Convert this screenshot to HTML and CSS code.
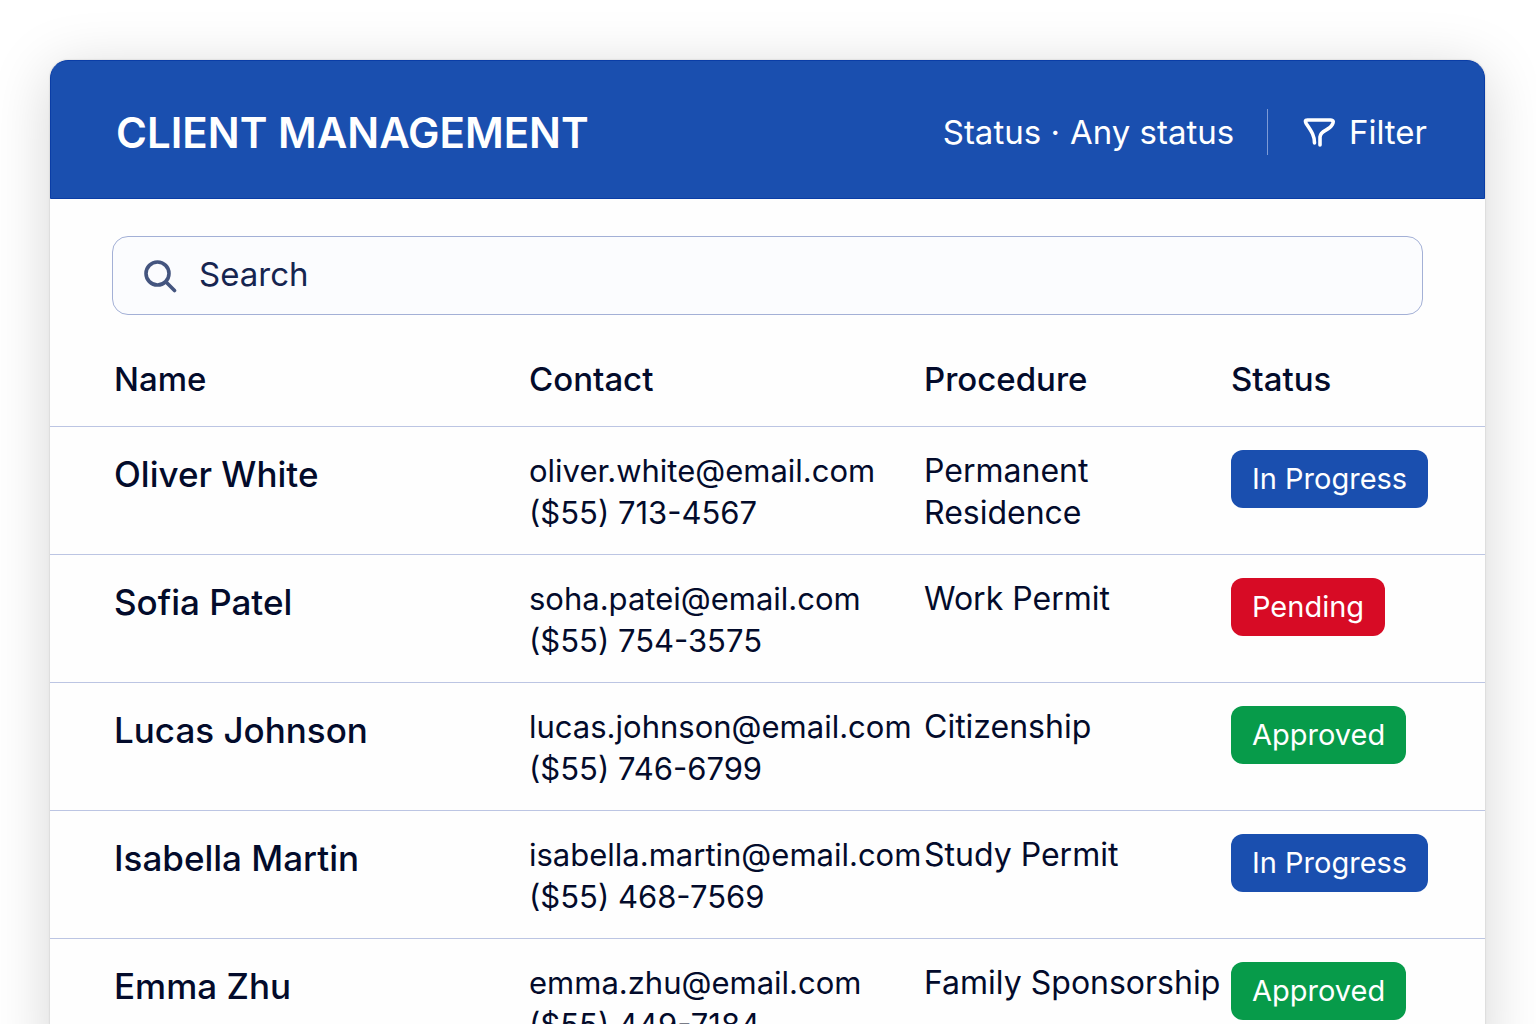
FILE: index.html
```html
<!DOCTYPE html>
<html lang="en">
<head>
<meta charset="utf-8">
<meta name="viewport" content="width=device-width, initial-scale=1">
<title>Client Management</title>
<link rel="stylesheet" href="styles.css">
</head>
<body>
<main class="card">
  <header class="card-header">
    <h1 class="title">CLIENT MANAGEMENT</h1>
    <div class="tools">
      <div class="status-filter">
        <label for="status">Status ·</label>
        <select id="status" class="status-select">
          <option>Any status</option>
        </select>
      </div>
      <button type="button" class="filter-button">
        <svg class="filter-icon" width="32" height="32" viewBox="0 0 32 32" fill="none" stroke="currentColor" stroke-width="3.6" stroke-linecap="round" stroke-linejoin="round" aria-hidden="true">
          <path d="M11.500 27C11.500 20 9 16 3.500 8Q1 4 4.500 4H27.500Q32 4 29 9C26 15 17.500 14 17 21V29"/>
        </svg>
        <span>Filter</span>
      </button>
    </div>
  </header>
  <div class="search">
    <svg class="search-icon" width="34" height="34" viewBox="0 0 34 34" fill="none" stroke="currentColor" stroke-width="3.6" stroke-linecap="round" aria-hidden="true">
      <circle cx="14.500" cy="14.500" r="11.500"/>
      <path d="M23 23L31.500 31.500"/>
    </svg>
    <input class="search-input" type="search" placeholder="Search" aria-label="Search">
  </div>
  <table class="clients">
    <colgroup>
      <col class="col-name"><col class="col-contact"><col class="col-procedure"><col class="col-status">
    </colgroup>
    <thead>
      <tr><th scope="col">Name</th><th scope="col">Contact</th><th scope="col">Procedure</th><th scope="col">Status</th></tr>
    </thead>
    <tbody>
      <tr>
        <th scope="row">Oliver White</th>
        <td class="contact">oliver.white@email.com<br>($55) 713-4567</td>
        <td>Permanent<br>Residence</td>
        <td><span class="badge badge-progress">In Progress</span></td>
      </tr>
      <tr>
        <th scope="row">Sofia Patel</th>
        <td class="contact">soha.patei@email.com<br>($55) 754-3575</td>
        <td>Work Permit</td>
        <td><span class="badge badge-pending">Pending</span></td>
      </tr>
      <tr>
        <th scope="row">Lucas Johnson</th>
        <td class="contact">lucas.johnson@email.com<br>($55) 746-6799</td>
        <td>Citizenship</td>
        <td><span class="badge badge-approved">Approved</span></td>
      </tr>
      <tr>
        <th scope="row">Isabella Martin</th>
        <td class="contact">isabella.martin@email.com<br>($55) 468-7569</td>
        <td>Study Permit</td>
        <td><span class="badge badge-progress">In Progress</span></td>
      </tr>
      <tr>
        <th scope="row">Emma Zhu</th>
        <td class="contact">emma.zhu@email.com<br>($55) 449-7184</td>
        <td>Family Sponsorship</td>
        <td><span class="badge badge-approved">Approved</span></td>
      </tr>
    </tbody>
  </table>
</main>
</body>
</html>
```
FILE: styles.css
```css
* {
  box-sizing: border-box;
}

body {
  margin: 0;
  height: 100vh;
  overflow: hidden;
  padding: 60px 51px 0 50px;
  background: #fff;
  color: #030b2b;
  font-family: Inter, "Liberation Sans", sans-serif;
}

.card {
  background: #fefefe;
  border-radius: 18px 18px 0 0;
  box-shadow: 0 0 2px rgba(0, 0, 0, 0.2), 0 10px 60px rgba(0, 0, 0, 0.17);
}

.card-header {
  display: flex;
  align-items: center;
  justify-content: space-between;
  min-height: 139px;
  padding: 4px 57px 0 65px;
  border: 1px solid #0a3da6;
  border-radius: 18px 18px 0 0;
  background: #1a4faf;
  color: #fff;
}

.title {
  margin: 0;
  padding-top: 2px;
  font-size: 42px;
  font-weight: 600;
  line-height: 48px;
}

.tools {
  display: flex;
  align-items: center;
  font-size: 33px;
  line-height: 46px;
}

.status-filter {
  display: flex;
  gap: 10px;
  padding-right: 32px;
  border-right: 1px solid #7d9bd6;
}

.status-select,
.filter-button {
  padding: 0;
  border: 0;
  background: none;
  color: inherit;
  font: inherit;
  appearance: none;
}

.filter-button {
  display: flex;
  align-items: center;
  gap: 14px;
  padding-left: 35px;
}

.search {
  display: flex;
  align-items: center;
  gap: 22px;
  height: 79px;
  margin: 37px 62px 0;
  padding: 0 30px;
  border: 1px solid #a3b0d6;
  border-radius: 16px;
  background: #fbfcfe;
}

.search-icon {
  flex: none;
  color: #44557f;
}

.search-input {
  flex: 1;
  min-width: 0;
  padding: 0 0 4px;
  border: 0;
  outline: 0;
  background: none;
  color: #162550;
  font: inherit;
  font-size: 33px;
  line-height: 42px;
}

.search-input::placeholder {
  color: #162550;
  opacity: 1;
}

.clients {
  width: 100%;
  table-layout: fixed;
  border-collapse: collapse;
  font-size: 32px;
  line-height: 42px;
}

.col-name {
  width: 479px;
}

.col-contact {
  width: 395px;
}

.col-procedure {
  width: 307px;
}

.clients th,
.clients td {
  padding: 0;
  text-align: left;
  vertical-align: top;
  white-space: nowrap;
}

.clients th:first-child {
  padding-left: 64px;
}

.clients thead th {
  height: 111px;
  padding-top: 43px;
  font-size: 33px;
  font-weight: 500;
}

.clients tbody tr {
  height: 128px;
  border-top: 1px solid #bcc5e3;
}

.clients tbody th,
.clients tbody td {
  padding-top: 23px;
}

.clients tbody th {
  padding-top: 26px;
  font-size: 35px;
  font-weight: 500;
}

.clients .contact {
  font-size: 31px;
}

.badge {
  display: inline-block;
  padding: 8px 21px;
  border-radius: 12px;
  color: #fff;
  font-size: 29px;
}

.badge-progress {
  background: #1a4faf;
}

.badge-pending {
  background: #d70b25;
}

.badge-approved {
  background: #079b4a;
}
```
